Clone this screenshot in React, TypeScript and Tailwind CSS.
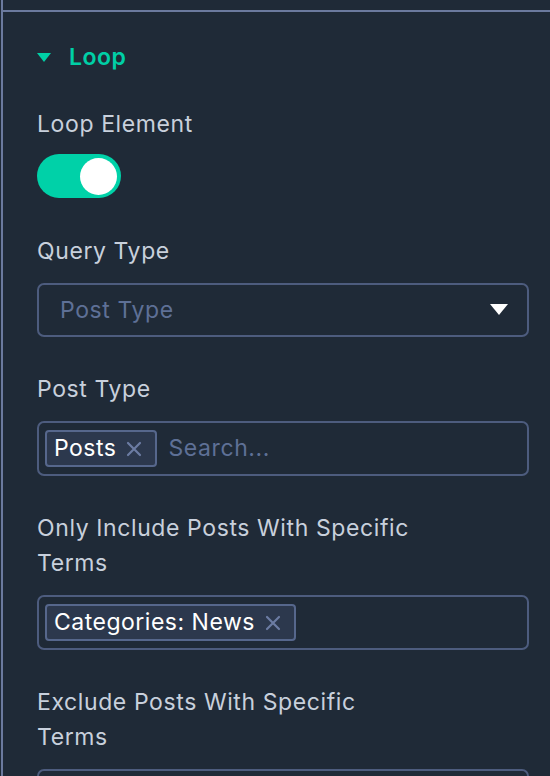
import React, { useState } from 'react';

const font = { fontFamily: 'Inter, "Noto Sans", sans-serif' };

function Label({ children }: { children: React.ReactNode }) {
  return (
    <div className="max-w-[385px] text-[23px] tracking-[0.6px] leading-[35px] text-[#c8d0dc] mb-[14px]">{children}</div>
  );
}

function Tag({ text }: { text: string }) {
  return (
    <span className="flex items-center h-[37px] rounded-[4px] border-2 border-[#56678c] bg-[#2c384d] pl-[7px] pr-[13px] text-[23px] tracking-[0.5px] text-white">
      {text}
      <svg className="ml-[10px]" width="16" height="16" viewBox="0 0 16 16" fill="none">
        <path d="M2 2L14 14M14 2L2 14" stroke="#6c7ca3" strokeWidth="2.2" strokeLinecap="round" />
      </svg>
    </span>
  );
}

export default function App() {
  const [on, setOn] = useState(true);

  return (
    <div className="w-[550px] h-[776px] overflow-hidden bg-[#1f2a37] pl-[1px]" style={font}>
      <div className="h-full border-l-2 border-[#6b7a9e] pt-[10px]">
        <div className="border-t-2 border-[#6b7a9e] pl-[34px] pr-[21px] pt-[28px]">
          {/* Section header */}
          <div className="flex items-center h-[35px] mb-[32px]">
            <svg width="14" height="10" viewBox="0 0 14 10" className="mr-[18px]">
              <path d="M0 0H14L7 9Z" fill="#00cfa6" />
            </svg>
            <span className="text-[23px] tracking-[0.5px] font-semibold text-[#00cfa6]">Loop</span>
          </div>

          {/* Loop Element */}
          <div className="mb-[36px]">
            <div className="text-[23px] tracking-[0.6px] leading-[35px] text-[#c8d0dc] mb-[12px]">Loop Element</div>
            <button
              onClick={() => setOn(!on)}
              className={`flex items-center w-[84px] h-[44px] rounded-full px-[4px] ${on ? 'bg-[#00d1a8] justify-end' : 'bg-[#4a5878] justify-start'}`}
            >
              <span className="w-[37px] h-[37px] rounded-full bg-white" />
            </button>
          </div>

          {/* Query Type */}
          <div className="mb-[35px]">
            <Label>Query Type</Label>
            <div className="flex items-center justify-between h-[54px] rounded-[7px] border-2 border-[#4d5c7e] pl-[21px] pr-[19px]">
              <span className="text-[23px] tracking-[0.6px] text-[#5e7096]">Post Type</span>
              <svg width="18" height="12" viewBox="0 0 18 12">
                <path d="M0 0H18L9 11Z" fill="#ffffff" />
              </svg>
            </div>
          </div>

          {/* Post Type */}
          <div className="mb-[35px]">
            <Label>Post Type</Label>
            <div className="flex items-center gap-[11px] h-[55px] rounded-[7px] border-2 border-[#4d5c7e] pl-[6px]">
              <Tag text="Posts" />
              <span className="text-[23px] tracking-[0.6px] text-[#5e7096]">Search...</span>
            </div>
          </div>

          {/* Include terms */}
          <div className="mb-[35px]">
            <Label>Only Include Posts With Specific Terms</Label>
            <div className="flex items-center gap-[11px] h-[55px] rounded-[7px] border-2 border-[#4d5c7e] pl-[6px]">
              <Tag text="Categories: News" />
            </div>
          </div>

          {/* Exclude terms */}
          <div className="mb-[35px]">
            <Label>Exclude Posts With Specific Terms</Label>
            <div className="flex items-center gap-[11px] h-[55px] rounded-[7px] border-2 border-[#4d5c7e] pl-[6px]" />
          </div>
        </div>
      </div>
    </div>
  );
}
